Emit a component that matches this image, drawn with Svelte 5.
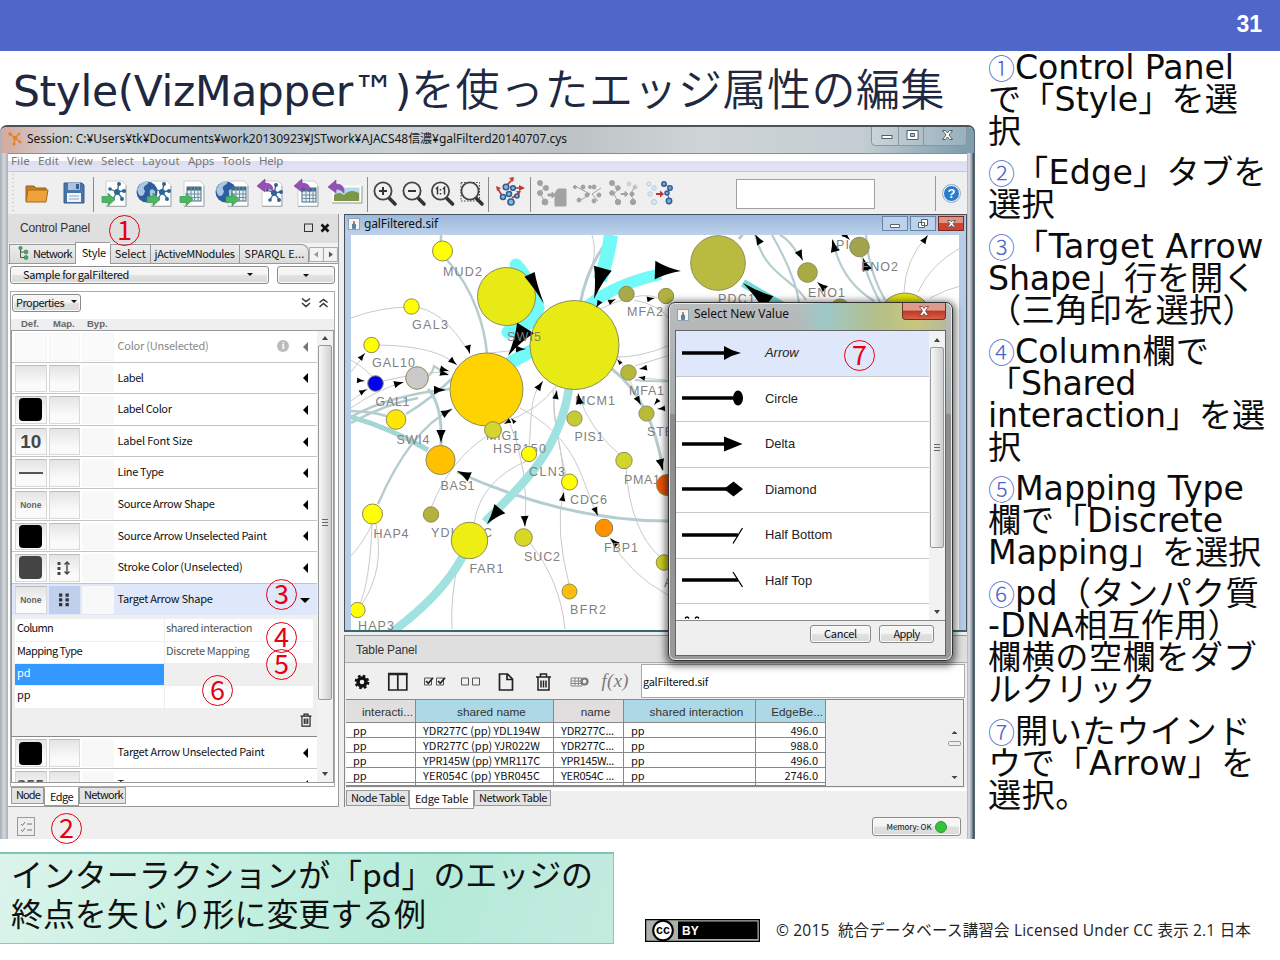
<script>
  // Spreads a label's letters so that it takes the given width.
  function fit(node, width) {
    const n = [...node.textContent.trim()].length;
    const now = node.getBoundingClientRect().width;
    if (width && n) node.style.letterSpacing = ((width - now) / n).toFixed(3) + 'px';
  }

  const steps = [
    ['①', [['Control Panel', 219], ['で「Style」を選', 250], ['択', 33]]],
    ['②', [['「Edge」タブを', 252], ['選択', 67]]],
    ['③', [['「Target Arrow', 249], ['Shape」行を開く', 268], ['（三角印を選択）', 268]]],
    ['④', [['Column欄で', 194], ['「Shared', 148], ['interaction」を選', 277], ['択', 33]]],
    ['⑤', [['Mapping Type', 229], ['欄で「Discrete', 235], ['Mapping」を選択', 273]]],
    ['⑥', [['pd（タンパク質', 244], ['-DNA相互作用）', 253], ['欄横の空欄をダブ', 269], ['ルクリック', 168]]],
    ['⑦', [['開いたウインド', 236], ['ウで「Arrow」を', 267], ['選択。', 101]]]
  ];

  const menus = ['File', 'Edit', 'View', 'Select', 'Layout', 'Apps', 'Tools', 'Help'];
  const menuW = [19, 21, 26, 33, 38, 26, 29, 24];

  const props = [
    { name: 'Color (Unselected)', w: 91, def: 'dim', off: true },
    { name: 'Label', w: 26, def: 'blank' },
    { name: 'Label Color', w: 54, def: 'black' },
    { name: 'Label Font Size', w: 75, def: 'ten' },
    { name: 'Line Type', w: 46, def: 'line' },
    { name: 'Source Arrow Shape', w: 97, def: 'none' },
    { name: 'Source Arrow Unselected Paint', w: 149, def: 'black' },
    { name: 'Stroke Color (Unselected)', w: 125, def: 'grey', map: 'cont' },
    { name: 'Target Arrow Shape', w: 95, def: 'none', map: 'disc', open: true }
  ];

  const shapes = ['Arrow', 'Circle', 'Delta', 'Diamond', 'Half Bottom', 'Half Top'];

  const rows = [
    ['YDR277C (pp) YDL194W', 'YDR277C...', '496.0'],
    ['YDR277C (pp) YJR022W', 'YDR277C...', '988.0'],
    ['YPR145W (pp) YMR117C', 'YPR145W...', '496.0'],
    ['YER054C (pp) YBR045C', 'YER054C ...', '2746.0']
  ];

  const nodes = [
    [442.5, 251, 10, '#ff0'], [506.5, 296.5, 29, '#e8ea15'], [574.5, 345, 44.5, '#e8ea15'],
    [486.5, 389.5, 36.5, '#ffd300'], [411.5, 306.5, 7.7, '#ff0'], [371.5, 345, 7.7, '#ff0'],
    [375.5, 383.5, 7.8, '#0000f5'], [417, 378, 11.3, '#cbc9c9'], [396, 419.5, 9.8, '#ffe600'],
    [440.5, 460, 14.6, '#ffc000'], [372.5, 514, 10, '#ff0'], [431, 514.5, 7.7, '#b2b23c'],
    [469.5, 540.5, 18.2, '#eeee14'], [523.5, 537.5, 8.8, '#d6d824'], [357.5, 610, 7.6, '#ff0'],
    [493, 430, 8.4, '#d4d630'], [529, 454, 7.6, '#ff0'], [574.5, 418.5, 7.6, '#c6ca34'],
    [569.5, 482, 8, '#ff0'], [624, 460.5, 8.2, '#d2d62a'], [604, 528, 8.8, '#ff9000'],
    [569.5, 591.5, 7.5, '#ffbd08'], [628.5, 372.5, 7.7, '#b6b83c'], [646.5, 413.5, 7.6, '#b8ba3a'],
    [667, 485, 10.5, '#ec5200'], [664, 562.5, 7.8, '#ccd020'], [626.5, 294, 7.7, '#a8aa4a'],
    [666, 296, 7.7, '#b0b240'], [718, 263, 27.3, '#b9bb40'], [807.5, 272.5, 9.8, '#a9ab42'],
    [859.5, 247, 9.8, '#a2a34c'], [905, 320, 27, '#dfe010'], [840, 308, 9, '#b4b43c']
  ];

  const under = [
    ['YDL194C', 431, 537, 61], ['MIG1', 486, 440, 33], ['HSP150', 493, 453, 53], ['MCM1', 575, 405, 40]
  ];
  const labels = [
    ['MUD2', 443, 276, 39], ['GAL3', 412, 328.5, 36], ['GAL10', 372, 367, 43], ['GAL1', 375.5, 405.5, 34],
    ['SWI4', 396.5, 443.5, 33], ['BAS1', 440.5, 489.5, 34], ['HAP4', 373.5, 538, 35],
    ['FAR1', 469.5, 573, 34], ['SUC2', 524, 561, 36], ['HAP3', 358, 630, 36],
    ['CLN3', 529, 476, 36], ['PIS1', 574.5, 441, 29], ['CDC6', 570, 504, 37],
    ['PMA1', 624, 484, 36], ['FBP1', 604, 552, 34], ['BFR2', 570, 613.5, 36], ['MFA1', 629, 395, 35],
    ['STE2', 647, 435.5, 34], ['MFA2', 627, 316, 36], ['PDC1', 718, 303, 37], ['ENO1', 808, 297, 37],
    ['ENO2', 861, 271, 37], ['SWI5', 507, 340.5, 34], ['PI', 836, 249, 13], ['APA1', 664, 587, 34]
  ];

  const thin = [
    'M351 318Q380 307 411 307T470 354', 'M371 345C410 345 440 350 457 365', 'M351 372Q362 358 365 353',
    'M351 360Q362 366 372 376', 'M383 381Q420 372 450 372', 'M351 401Q363 392 368 389', 'M351 408Q380 388 402 383',
    'M372 524Q370 580 360 604', 'M372 524Q365 540 351 556', 'M376 524Q385 570 362 604',
    'M431 508Q450 460 487 436', 'M529 460Q480 480 474 524', 'M508 418Q530 470 525 526', 'M529 450C532 410 530 395 543 381',
    'M563 493C565 440 548 420 556 390', 'M570 490Q555 440 553 390', 'M620 455Q590 430 578 394', 'M626 468Q630 530 660 557',
    'M569 584Q555 530 563 493', 'M530 543Q560 580 565 629', 'M459 557Q450 600 452 629', 'M668 595Q630 575 610 539',
    'M500 424Q540 410 556 386', 'M520 408C580 440 580 480 598 516', 'M600 309Q640 290 658 298', 'M634 300Q660 305 670 320',
    'M614 357Q640 358 670 345', 'M635 366L670 355', 'M614 350Q622 360 640 405', 'M592 235C600 260 585 280 580 300',
    'M904 292Q905 260 927 236', 'M918 292Q930 265 960 248', 'M930 298Q945 290 960 286', 'M666 380L641 378', 'M480 354L528 349'
  ];
  const wide = [
    ['M441 235V242', 2.5], ['M447 260C475 290 485 330 487 354', 2.5], ['M351 417Q390 395 450 389', 2.5],
    ['M351 411Q375 412 386 416', 2.5], ['M406 414Q430 400 457 374', 2.5], ['M428 389Q443 405 441 446', 3],
    ['M457 472C530 505 600 521 668 521', 3], ['M378 504Q410 430 452 409', 2.5],
    ['M351 423Q385 404 418 398', 2.5], ['M612 369Q652 400 663 470', 3], ['M635 380Q650 382 670 381', 2],
    ['M580 305Q587 265 612 235', 3], ['M755 235C765 275 795 280 806 300', 2.2], ['M772 235Q795 275 799 302', 2.2],
    ['M739 239L746 230', 3], ['M780 235Q790 240 799 256', 2.2], ['M833 240Q840 280 874 301', 2.2],
    ['M862 257Q868 280 880 302', 2.2], ['M866 235Q868 270 885 300', 2.2], ['M412 374Q430 384 434 366L448 375', 2.2]
  ];
  // [tip x, tip y, direction in degrees, length, half width as a share of length]
  const heads = [
    [544, 304, 64, 33, 0.17], [508, 356, 122, 33, 0.3], [594, 299, 106, 32, 0.29], [681, 271, 2, 26], [743, 283, 218, 32, 0.26],
    [470, 354, 75, 9], [457, 365, 40, 9], [449, 371, 15, 9], [449, 375, 15, 9], [365, 353, -50, 8],
    [365, 381, 5, 8], [367, 389, -30, 8], [404, 382, -15, 10], [446, 390, 0, 12], [452, 409, -30, 11],
    [441, 443, 90, 13], [457, 471, 205, 14], [487, 524, 130, 20], [525, 527, 88, 11], [543, 381, -55, 10],
    [557, 390, -80, 9], [578, 393, -100, 11], [564, 492, -78, 9], [598, 516, 66, 9], [610, 538, 225, 10],
    [663, 471, 75, 12], [641, 405, 60, 9], [639, 369, 170, 8], [638, 377, 190, 7], [654, 405, 130, 7],
    [657, 409, 175, 8], [616, 299, -25, 8], [655, 298, -10, 8], [596, 308, 120, 8], [526, 349, 0, 10],
    [803, 261, 65, 11], [817, 282, 220, 11], [755, 234, 240, 11], [832, 239, -105, 13], [863, 258, -110, 13],
    [928, 235, -55, 9], [850, 240, 45, 9], [617, 359, 230, 6], [511, 418, 230, 6], [504, 424, 150, 7]
  ];
</script>

{#snippet doc(x, y)}
  <path d="M{x} {y}h16l4 4v21h-20z" fill="#fff" stroke="#ccd0d3" />
  <path d="M{x + 20} {y + 5}v20.500h-20" fill="none" stroke="#a9adb0" />
{/snippet}
{#snippet net(x, y)}
  <path d="M{x} {y}l-7 -3M{x} {y}l2-8M{x} {y}l6 -1M{x} {y}l-4 7M{x} {y}l5 6" stroke="#3a6c94" stroke-width="1.300" />
  <g fill="#2f6591"><circle cx={x} cy={y} r="3" /><circle cx={x - 7} cy={y - 3} r="1.800" /><circle cx={x + 2} cy={y - 8} r="2" /><circle cx={x + 7} cy={y - 1} r="2" /><circle cx={x - 4} cy={y + 7} r="1.800" /><circle cx={x + 5} cy={y + 7} r="2" /></g>
{/snippet}
{#snippet grid(x, y)}
  <rect {x} {y} width="14" height="14" fill="#e9eff3" stroke="#456c87" />
  <rect {x} {y} width="14" height="3.500" fill="#456c87" />
  <path d="M{x + 4} {y}v14M{x + 7.5} {y}v14M{x + 11} {y}v14M{x} {y + 7}h14M{x} {y + 10.5}h14" stroke="#6f8fa5" />
{/snippet}
{#snippet globe(x)}
  <circle cx={x} cy="192" r="10.500" fill="#2c5d9e" /><path d="M{x - 9} 188q3-7 9-7q3 2-1 4t-1 6q-1 5-4 5t-4-8zM{x + 3} 190q4-2 5 1t-3 8q-3-4-2-9z" fill="#a9c7e4" />
{/snippet}
{#snippet into(x, y)}
  <path d="M{x} {y - 2.5}h6v-3.500l7 6.500l-7 6.500v-3.500h-6z" fill="#4db563" stroke="#36964d" stroke-width=".7" />
{/snippet}
{#snippet outof(x, y)}
  <path d="M{x} {y}l8-7v4q9 0 8 9q-3-4-8-4v4z" fill="#9550b5" stroke="#7c3d9b" stroke-width=".6" />
{/snippet}
{#snippet lens(x)}
  <path d="M{x + 5} 197l7 7" stroke="#333" stroke-width="3.600" stroke-linecap="round" /><circle cx={x} cy="191" r="8.600" fill="#f1f1f1" stroke="#444" stroke-width="1.800" />
{/snippet}
{#snippet bin()}
  <svg class="bin" viewBox="0 0 16 18"><path d="M1 4h14M5.500 4V1.500h5V4M2.800 4v12.800h10.400V4M5.800 7v7M8 7v7M10.200 7v7" fill="none" stroke="#222" stroke-width="1.500" /></svg>
{/snippet}

<div class="slide">
  <header><b>31</b></header>
  <main>
    <section class="left">
      <h1><span class="lat" use:fit={398}>Style(VizMapper™)</span><span use:fit={534}>を使ったエッジ属性の編集</span></h1>

      <div class="window">
        <div class="titlebar">
          <svg width="17" height="17" viewBox="0 0 17 17"><g stroke="#e58320" stroke-width="1.300"><path d="M8 8L3 4M8 8l4-4M8 8l5 4M8 8l-1 6" /></g><g fill="#e8811a"><circle cx="8" cy="8" r="2.300" /><circle cx="3" cy="4" r="1.700" /><circle cx="12" cy="4" r="1.300" /><circle cx="13" cy="12" r="1.400" /><circle cx="7" cy="14" r="1.500" /></g></svg>
          <span class="session"><span use:fit={540}>Session: C:¥Users¥tk¥Documents¥work20130923¥JSTwork¥AJACS48信濃¥galFilterd20140707.cys</span></span>
          <svg class="winbtns" width="96" height="20" viewBox="0 0 96 20"><path d="M.5 0v15q0 3.500 4 3.500h87q4 0 4-3.500V0M27.500 0v18M52.500 0v18" fill="#fff3" stroke="#8b959c" /><g fill="#fff" stroke="#555e66"><rect x="11" y="8.500" width="10" height="3" /><path fill-rule="evenodd" d="M36 3.500h11v9H36zM39.500 6.500h4v3h-4z" /><path d="M71.500 3.500h3l2 2.500 2-2.500h3l-3.500 4.500 3.500 4.500h-3l-2-2.500-2 2.500h-3l3.500-4.500z" /></g></svg>
        </div>

        <div class="client">
          <nav>{#each menus as m, i}<span use:fit={menuW[i]}>{m}</span>{/each}</nav>

          <div class="toolbar">
            <svg width="925" height="42" viewBox="8 172 925 42" fill="none">
              <path d="M13 174v38" stroke="#aaa" stroke-dasharray="1 3" />
              <path d="M26 201v-15h8l2 2h10v4" fill="#c67d1f" stroke="#9a5e13" /><path d="M26 202l2-12h20l-2 12z" fill="#eda23b" stroke="#a66a17" />
              <path d="M64 183h18l2 2v18H64z" fill="#4775a9" stroke="#365f91" /><path d="M68 183h12v7H68z" fill="#a9c4df" /><path d="M76 184h3v5h-3z" fill="#365f91" /><path d="M67 193h14v9H67z" fill="#f2f6fa" /><path d="M69 196h10M69 199h10" stroke="#8ca6c2" />
              <path d="M93.500 177v35M367.500 177v35M488.500 177v35M530.500 177v35" stroke="#8a8a8a" />
              {@render doc(106, 181)}{@render net(117, 192)}{@render into(102, 199)}
              {@render doc(151, 181)}{@render globe(147)}{@render net(162, 192)}{@render into(147, 199)}
              {@render doc(184, 181)}{@render grid(187, 187)}{@render into(180, 199)}
              {@render doc(228, 181)}{@render globe(226)}{@render grid(232, 187)}{@render into(226, 199)}
              {@render doc(262, 181)}{@render net(274, 193)}{@render outof(257, 186)}
              {@render doc(298, 181)}{@render grid(302, 188)}{@render outof(294, 186)}
              <path d="M333.500 186.500h27v15h-27z" fill="#b9d9ed" stroke="#fff" stroke-width="2" /><path d="M334 201v-6q5-4 10 0q6-7 15-2v8z" fill="#7b9848" /><path d="M332 203h30v-17" stroke="#999" />{@render outof(328, 187)}
              {@render lens(383)}<path d="M379 191h8M383 187v8" stroke="#333" stroke-width="2" />
              {@render lens(412)}<path d="M408 191h8" stroke="#333" stroke-width="2" />
              {@render lens(440.5)}<path d="M436 189l1.500-1.500v7M443 189l1.500-1.500v7" stroke="#333" stroke-width="1.500" /><path d="M440.500 189v1.500M440.500 193v1.500" stroke="#333" stroke-width="1.500" />
              <path d="M461 182.500h18.500V201H461z" stroke="#444" stroke-dasharray="1.500 1.500" />{@render lens(470)}
              <g stroke="#c03a3a" stroke-width="1.600"><path d="M506 186l6-6M514 188h8M503 197l-5-8M512 198l7-5" /></g><path d="M509 178l5-1-1 5zM519 185l6 3-6 3zM496 186l5 2-4 3zM516 191l5 0-2 4z" fill="#c03a3a" />
              <g fill="#8fb6db" stroke="#315f91" stroke-width="1.600"><circle cx="506" cy="187" r="2.800" /><circle cx="513" cy="188" r="2.300" /><circle cx="503" cy="197" r="2.500" /><circle cx="509" cy="194" r="2.500" /><circle cx="511" cy="202" r="3" /><circle cx="517" cy="196" r="2" /></g>
              <g fill="#a2a2a2" stroke="#a2a2a2"><path d="M539 183l5 5-4 5 5 9M577 187l13 7-9 6M601 188l-9 6 6 7M612 183l6 6-4 5 4 8M635 187l-5 7 5 8" fill="none" /><circle cx="540" cy="183" r="2.500" /><circle cx="546" cy="188" r="2.500" /><circle cx="540" cy="193" r="2.500" /><circle cx="545" cy="202" r="3" /><path d="M555 193l3-4h8v17h-11zM548 194h4l0-2 3 3-3 3v-2h-4z" />
                <circle cx="575" cy="187" r="1.500" /><circle cx="583" cy="187" r="2" /><circle cx="587" cy="195" r="2" /><circle cx="579" cy="200" r="2" /><circle cx="590" cy="187" r="1.500" /><circle cx="594" cy="187" r="2" /><circle cx="599" cy="195" r="2" /><circle cx="594" cy="201" r="2" />
                <circle cx="612" cy="183" r="2.500" /><circle cx="618" cy="188" r="2.300" /><circle cx="612" cy="193" r="2.300" /><circle cx="618" cy="202" r="2.700" /><path d="M621 193.500h4v-2l3 2.500-3 2.500v-2h-4z" /><circle cx="629" cy="184" r="2" opacity=".4" /><circle cx="635" cy="187" r="2" opacity=".5" /><circle cx="632" cy="194" r="2" /><circle cx="633" cy="202" r="2.700" /></g>
              <g fill="#dce8f3" stroke="#b4cade"><circle cx="649" cy="184" r="2" /><circle cx="654" cy="188" r="2.200" /><circle cx="650" cy="194" r="2.200" /><circle cx="654" cy="202" r="2.500" /></g><path d="M656 193h4v-2.500l4 3.500-4 3.500V195h-4z" fill="#bd3434" /><path d="M665 184l5 4-3 5 3 8" stroke="#3a6796" /><g fill="#7da8d1" stroke="#315f91" stroke-width="1.500"><circle cx="664" cy="184" r="2.200" /><circle cx="670" cy="188" r="2.200" /><circle cx="667" cy="193" r="2" /><circle cx="669" cy="201" r="2.700" /></g>
              <rect x="736.500" y="179.500" width="138" height="29" fill="#fff" stroke="#a0a0a0" />
            </svg>
            <div class="help"><i>?</i></div>
          </div>

          <div class="panes">
            <div class="control">
              <div class="cp-head"><span use:fit={70}>Control Panel</span><svg width="28" height="12" viewBox="0 0 28 12"><rect x="1.500" y="2" width="8" height="7.500" fill="none" stroke="#333" /><path d="M18.500 2.500l7 7M25.500 2.500l-7 7" stroke="#111" stroke-width="2.600" /></svg></div>
              <div class="tabs">
                <div class="t t1"><svg width="11" height="14" viewBox="0 0 11 14"><path d="M2.500 2v9.500H8M2.500 6H8" fill="none" stroke="#555" /><g fill="#4aa860" stroke="#2d7a42" stroke-width=".6"><circle cx="2.500" cy="2" r="1.700" /><circle cx="8" cy="6" r="2" /><circle cx="8" cy="11.500" r="2" /></g></svg><em use:fit={39}>Network</em></div>
                <span class="t t2 on"><span use:fit={24}>Style</span></span>
                <span class="t t3"><span use:fit={31}>Select</span></span>
                <span class="t t4"><span use:fit={80}>jActiveMNodules</span></span>
                <span class="t t5"><span use:fit={60}>SPARQL E...</span></span>
                <svg class="tnav" width="29" height="15" viewBox="0 0 29 15"><path d="M.5.5h14v14H.5zM14.500.5h14v14h-14z" fill="#f4f4f4" stroke="#aaa" /><path d="M9 4.500v6l-4-3z" fill="#999" /><path d="M20 4.500v6l4-3z" fill="#555" /></svg>
              </div>
              <div class="selects">
                <div class="btn combo"><span use:fit={106}>Sample for galFiltered</span><i class="dn"></i></div>
                <div class="btn mini"><i class="dn"></i></div>
              </div>
              <div class="vizbox">
                <div class="pbar"><div class="btn pbtn"><span use:fit={48}>Properties</span><i class="dn"></i></div>
                  <svg width="28" height="12" viewBox="0 0 28 12" fill="none" stroke="#333" stroke-width="1.500"><path d="M1 1.500l4 3 4-3M1 6l4 3.500L9 6M18.500 5.500l4-3 4 3M18.500 10l4-3.500 4 3.500" /></svg></div>
                <div class="cols"><span>Def.</span><span>Map.</span><span>Byp.</span></div>
                <div class="list">
                  <div class="items">
                    {#each props as p}
                      <div class="prop" class:off={p.off} class:open={p.open}>
                        <div class="cell {p.def}">{#if p.def === 'ten'}10{:else if p.def === 'none'}None{:else if p.def !== 'dim' && p.def !== 'blank'}<i></i>{/if}</div>
                        <div class="cell" class:sel={p.open}>
                          {#if p.map === 'cont'}<svg width="16" height="16" viewBox="0 0 16 16"><g fill="#444"><path d="M1.500 2h3v3h-3zM1.500 7h3v3h-3zM1.500 12h3v3h-3z" /></g><path d="M11 2v12M8.500 4.500L11 2l2.500 2.500M8.500 11.500L11 14l2.500-2.500" fill="none" stroke="#444" stroke-width="1.400" /></svg>
                          {:else if p.map === 'disc'}<svg width="14" height="14" viewBox="0 0 14 14" fill="#333"><path d="M2 .5h3.300v3.300H2zM2 5.300h3.300v3.300H2zM2 10h3.300v3.300H2zM8.500.5h3.300v3.300H8.500zM8.500 5.300h3.300v3.300H8.500zM8.500 10h3.300v3.300H8.500z" /></svg>{/if}
                        </div>
                        <div class="cell byp"></div>
                        <div class="pname"><span use:fit={p.w}>{p.name}</span></div>
                        {#if p.off}<b class="info">i</b>{/if}
                        <i class="tri" class:down={p.open}></i>
                      </div>
                    {/each}
                    <div class="mapping">
                      <div class="mrow"><span class="k"><span use:fit={36}>Column</span></span><span class="v"><span use:fit={86}>shared interaction</span></span></div>
                      <div class="mrow"><span class="k"><span use:fit={65}>Mapping Type</span></span><span class="v"><span use:fit={83}>Discrete Mapping</span></span></div>
                      <div class="mrow pd"><span class="k">pd</span><span class="v"></span></div>
                      <div class="mrow"><span class="k">pp</span><span class="v"></span></div>
                      <div class="trash">{@render bin()}</div>
                    </div>
                    <div class="prop"><div class="cell black"><i></i></div><div class="cell"></div><div class="cell byp"></div><div class="pname"><span use:fit={147}>Target Arrow Unselected Paint</span></div><i class="tri"></i></div>
                    <div class="prop last"><div class="cell off3">255</div><div class="cell"></div><div class="cell byp"></div><div class="pname">Transparency</div><i class="tri"></i></div>
                  </div>
                  <div class="scroll"><i class="up"></i><div class="thumb"><u></u></div><div class="sp"></div><i class="dn2"></i></div>
                </div>
              </div>
              <div class="btabs"><span class="b1"><span use:fit={24}>Node</span></span><span class="b2 on"><span use:fit={23}>Edge</span></span><span class="b3"><span use:fit={39}>Network</span></span></div>
            </div>

            <div class="work">
              <div class="frame">
                <div class="ftitle"><i class="java"></i><span use:fit={74}>galFiltered.sif</span>
                  <svg width="82" height="16" viewBox="0 0 82 16"><rect x=".5" y=".5" width="25" height="14" fill="#bcd2ea" stroke="#6584a6" /><rect x="28.500" y=".5" width="25" height="14" fill="#bcd2ea" stroke="#6584a6" /><rect x="56.500" y=".5" width="25" height="14" fill="#cc4430" stroke="#7d2a22" /><path d="M57 1h24v6H57z" fill="#e09283" /><g fill="#fff" stroke="#59636e"><path d="M8.500 8.500h9v3h-9zM39.500 3.500h6v6h-6zM36.500 6.500h6v5h-6z" /><path d="M65.500 4.500h2.500l1.500 1.500 1.500-1.500h2.500l-2.500 3.200 2.500 3.300h-2.500l-1.500-1.700-1.500 1.700h-2.500l2.500-3.300z" /></g></svg>
                </div>
                <svg class="canvas" width="608" height="395" viewBox="351 235 608 395">
                  <g fill="none" stroke="#cacaca">{#each thin as d}<path {d} />{/each}</g>
                  <g fill="none" stroke="#b6cdcf">{#each wide as [d, w]}<path {d} stroke-width={w} />{/each}</g>
                  <g fill="none">
                    <path d="M351 417Q390 428 428 450" stroke="#a5d6d4" stroke-width="5" />
                    <path d="M569 388C558 460 510 495 485 522M463 556C445 590 415 615 392 632" stroke="#a0e2df" stroke-width="8.500" />
                    <path d="M516 265Q530 280 538 308Q530 330 508 332M560 335L508 364" stroke="#72faf8" stroke-width="13" stroke-linecap="round" />
                    <path d="M611 235Q608 258 600 280" stroke="#72faf8" stroke-width="14" /><path d="M588 306Q615 284 661 274" stroke="#72faf8" stroke-width="12" />
                    <path d="M743 283L790 310" stroke="#72d8d8" stroke-width="8" />
                  </g>
                  <g class="gl">{#each under as [t, x, y, w]}<text {x} {y} textLength={w}>{t}</text>{/each}</g>
                  {#each nodes as [x, y, r, c]}<circle cx={x} cy={y} {r} fill={c} stroke="#8d8c56" />{/each}
                  {#each heads as [x, y, a, s, k = 0.36]}<path d="M0 0Q{-s * 0.6} {-s * k * 0.35} {-s} {-s * k}L{-s} {s * k}Q{-s * 0.6} {s * k * 0.35} 0 0Z" transform="translate({x} {y}) rotate({a})" />{/each}
                  <g class="gl">{#each labels as [t, x, y, w]}<text {x} {y} textLength={w}>{t}</text>{/each}</g>
                </svg>
              </div>
              <div class="tpanel">
                <div class="tp-head"><span use:fit={61}>Table Panel</span></div>
                <div class="tp-tools">
                  <svg width="290" height="34" viewBox="346 663.500 290 34" fill="none" stroke="#222">
                    <circle cx="362" cy="682.500" r="4" stroke-width="3.500" stroke="#111" /><circle cx="362" cy="682.500" r="6.200" stroke="#111" stroke-width="2.300" stroke-dasharray="2.600 2.270" />
                    <path d="M388.800 674.500h18v16h-18zM397.800 674v16" stroke-width="1.700" /><path d="M388 674.500h19.500" stroke-width="2.500" />
                    <path d="M424.500 678.500h7v7h-7zM436.500 678.500h7v7h-7z" stroke="#555" /><path d="M426 681.500l2.300 2.300 4.700-5.500M438 681.500l2.300 2.300 4.700-5.500" stroke-width="1.700" />
                    <path d="M461.500 678.500h7v7h-7zM472.500 678.500h7v7h-7z" stroke="#555" />
                    <path d="M499.500 674.500h8l5 5v11h-13zM507 674.500v5.500h5.500" stroke-width="1.700" />
                    <path d="M536 677.500h15M540.500 677v-2.500h6v2.500M538 678v12.500h11V678M541 681v7M543.500 681v7M546 681v7" stroke-width="1.500" />
                    <path d="M571 678.500h11v8h-11zM571 681.500h11M571 684h11M575 678v8M578.500 678v8" stroke="#888" /><circle cx="584.500" cy="682" r="3" stroke="#777" stroke-width="2.200" />
                    <text x="601.500" y="687" textLength="27" font-family="Liberation Serif" font-style="italic" font-size="18.500" fill="#777" stroke="none">f(x)</text>
                  </svg>
                  <div class="tname"><span use:fit={65}>galFiltered.sif</span></div>
                </div>
                <div class="tbl">
                  <div class="tr th"><span>interacti...</span><span class="b">shared name</span><span>name</span><span class="b">shared interaction</span><span class="b">EdgeBe...</span></div>
                  {#each rows as r}
                    <div class="tr"><span>pp</span><span><em use:fit={117}>{r[0]}</em></span><span><em use:fit={53}>{r[1]}</em></span><span>pp</span><span>{r[2]}</span></div>
                  {/each}
                  <div class="tr end"><span></span><span></span><span></span><span></span><span></span></div>
                  <svg class="tscroll" width="16" height="60" viewBox="0 0 16 60"><path d="M5.500 10l3-3 3 3zM5.500 52l3 3 3-3z" fill="#444" /><rect x="2.500" y="17.500" width="12" height="4" rx="1" fill="#eee" stroke="#999" /></svg>
                </div>
                <div class="ttabs"><span class="w1"><em use:fit={54}>Node Table</em></span><span class="w2 on"><em use:fit={53}>Edge Table</em></span><span class="w3"><em use:fit={68}>Network Table</em></span></div>
              </div>
            </div>
          </div>

          <div class="status">
            <svg width="19" height="19" viewBox="0 0 19 19" fill="none" stroke="#999"><rect x=".5" y=".5" width="17" height="18" fill="#eee" /><path d="M4 7l1.500 1.500L8 5M10 7h5M4 13l1.500 1.500L8 11M10 13h5" stroke="#777" /></svg>
            <div class="btn mem"><span use:fit={45}>Memory: OK</span><i></i></div>
          </div>
        </div>

        <div class="dialog">
          <div class="dtitle"><i class="java"></i><span use:fit={95}>Select New Value</span><div class="dx"><svg width="12" height="10" viewBox="0 0 12 10"><path d="M1.500.5h3L6 2.500 7.500.5h3L7.500 5l3 4.500h-3L6 7.500 4.500 9.500h-3L4.500 5z" fill="#fff" stroke="#6b3a36" stroke-width=".8" /></svg></div></div>
          <div class="dbody">
            <div class="dlist">
              <div class="ditems">
                {#each shapes as s, i}
                  <div class="di" class:cur={i === 0}>
                    <svg width="68" height="20" viewBox="0 0 68 20"><path d="M0 10h{[46, 54, 46, 46, 56, 56][i]}" stroke="#000" stroke-width="3.400" />
                      {#if i === 0}<path d="M42 3q8 5 17 7q-9 2-17 7z" />{:else if i === 1}<ellipse cx="56" cy="10" rx="5" ry="7.500" />{:else if i === 2}<path d="M42 2.500L60.500 10 42 17.500z" />{:else if i === 3}<path d="M42 10l9.500-7.500L61 10l-9.500 7.500z" />{:else if i === 4}<path d="M51 18.500L60.500 3" stroke="#000" stroke-width="1.300" />{:else}<path d="M51 2l9.500 15" stroke="#000" stroke-width="1.300" />{/if}
                    </svg><span>{s}</span>
                  </div>
                {/each}
                <div class="di more"><svg width="20" height="3" viewBox="0 0 20 3"><path d="M3 2.500q2-3 4 0M13 2.500q2-3 4 0" fill="none" stroke="#000" stroke-width="1.500" /></svg></div>
              </div>
              <div class="scroll"><i class="up"></i><div class="thumb"><u></u></div><div class="sp"></div><i class="dn2"></i></div>
            </div>
            <div class="dbtns"><div class="btn"><span use:fit={33}>Cancel</span></div><div class="btn b2n"><span use:fit={26}>Apply</span></div></div>
          </div>
        </div>
      </div>

      <div class="foot">
        <div class="summary"><div><span use:fit={582}>インターラクションが「pd」のエッジの</span></div><div><span use:fit={415}>終点を矢じり形に変更する例</span></div></div>
      </div>
    </section>

    <aside>
      {#each steps as [n, lines]}
        <div class="step">{#each lines as [t, w], i}<div class="ln">{#if i === 0}<span class="num">{n}</span>{/if}<span use:fit={w}>{t}</span></div>{/each}</div>
      {/each}
    </aside>
  </main>

  <div class="licence">
    <svg width="115" height="23" viewBox="0 0 115 23"><rect x=".5" y=".5" width="114" height="22" fill="#aab2ab" stroke="#000" stroke-width="1.500" /><path d="M33 2.500h79.500V20H33z" fill="#000" /><circle cx="18" cy="11.500" r="9.800" fill="#fff" stroke="#000" stroke-width="2" /><text x="11" y="15" font-family="Liberation Sans" font-weight="bold" font-size="12.500">cc</text><text x="37" y="16" font-family="Liberation Sans" font-weight="bold" font-size="12" fill="#fff">BY</text></svg>
    <span use:fit={475}>© 2015&nbsp; 統合データベース講習会 Licensed Under CC 表示 2.1 日本</span>
  </div>

  <div class="mark m1">1</div><div class="mark m2">2</div><div class="mark m3">3</div><div class="mark m4">4</div><div class="mark m5">5</div><div class="mark m6">6</div><div class="mark m7">7</div>
</div>

<style>
  :global(body) { margin: 0; background: #fff; }
  .slide, .slide * { box-sizing: border-box; }
  .slide { position: relative; width: 1280px; height: 960px; overflow: hidden; font-family: "Noto Sans CJK JP", sans-serif; color: #111; background: #fff; }
  .slide span { white-space: nowrap; }
  [class] > span, em { display: inline-block; font-style: normal; }
  header { height: 51px; background: #4f67c9; display: flex; justify-content: flex-end; padding-right: 18px; }
  header b { font: bold 23px/48px "Liberation Sans", sans-serif; color: #fff; }
  main { display: flex; height: 909px; }
  .left { width: 975px; flex: none; }
  h1 { margin: 0; height: 74px; padding-left: 13px; display: flex; align-items: baseline; font-weight: 350; font-size: 44px; line-height: 73px; color: #202840; }
  h1 span { display: inline-block; }
  .lat { font-family: "DejaVu Sans", sans-serif; font-size: 42.500px; font-weight: 400; }

  .window { position: relative; height: 714px; padding: 0 8px; border-top: 2px solid #4a525a; border-radius: 7px 7px 0 0; background: linear-gradient(90deg, #a4adb6, #d5d9dd 4px, #aab0b6 8px, #aab0b6 967px, #dde1e6 969px, #8f979f 972px, #333b45 974px, #78939f); }
  .titlebar { height: 26px; margin: 0 -7px; padding-left: 6px; display: flex; align-items: flex-start; border-radius: 6px 6px 0 0; background: linear-gradient(90deg, #d5a89f, #cfd3d6 60px, #b8c4cb 240px, #ccd2d5 400px, #bcc1c3 560px, #cfd4d6 700px, #c4ced3 860px, #7f9fae 961px); }
  .titlebar > svg:first-child { margin-top: 3px; }
  .session { flex: 1; padding-left: 3px; font: 12px/23px "Noto Sans", "Noto Sans CJK JP", sans-serif; color: #161616; }
  .session span { display: inline-block; }
  .winbtns { margin-right: 7px; }
  .client { height: 686px; background: #efefef; border-top: 1px solid #8b8e90; display: flex; flex-direction: column; }
  nav { height: 18px; display: flex; gap: 8px; padding-left: 3px; background: linear-gradient(#fff 0 40%, #dcdff1 42%, #e2e4f4); border-bottom: 1px solid #c2c4ce; font: 11.500px/13px "Noto Sans", sans-serif; color: #777; }
  nav span { display: inline-block; }
  .toolbar { height: 42px; flex: none; display: flex; background: #efefef; }
  .help { display: flex; align-items: center; padding-left: 7px; border-left: 1px solid #999; margin: 4px 0 3px 2px; }
  .help i { width: 17px; height: 17px; border-radius: 50%; border: 1px solid #fff; outline: 1px solid #9ab; background: #2a7bc9; color: #fff; font: bold 13px/15px "Liberation Sans", sans-serif; text-align: center; }
  .panes { height: 593px; display: flex; gap: 5px; }
  .control { width: 331px; font-size: 11px; line-height: 14px; display: flex; flex-direction: column; border-right: 1px solid #999; border-bottom: 1px solid #999; background: #fff; }
  .cp-head { height: 29px; padding: 0 7px 2px 12px; display: flex; justify-content: space-between; align-items: center; background: #dfdfdf; font: 12px "Liberation Sans", sans-serif; color: #333; }
  .tabs { height: 21px; display: flex; align-items: flex-end; padding-left: 1px; background: #f2f2f2; border-bottom: 1px solid #999; }
  .t { height: 19px; padding: 1px 0 0 4px; border: 1px solid #999; border-bottom: 0; border-right: 0; background: linear-gradient(#eee, #dadada); }
  .t1 { width: 66px; display: flex; gap: 4px; padding-left: 8px; }
  .t1 svg { flex: none; }
  .t2 { width: 35px; height: 22px; padding-left: 6px; padding-top: 2px; background: #fff; margin-bottom: -1px; }
  .t3 { width: 40px; padding-left: 4px; }
  .t4 { width: 90px; }
  .t5 { width: 70px; border-right: 1px solid #999; border-radius: 0 8px 0 0; }
  .tnav { margin-bottom: 1px; }
  .selects { display: flex; gap: 8px; padding: 2px 3px 0 2px; }
  .btn { display: flex; align-items: center; justify-content: center; border: 1px solid #8a8a8a; border-radius: 3px; background: linear-gradient(#f5f5f5 45%, #e0e0e0 55%, #dadada); font-size: 11px; line-height: 14px; box-shadow: inset 0 0 0 1px #fafafa; padding-bottom: 3px; }
  .combo { width: 261px; height: 18px; justify-content: space-between; padding: 0 15px 2px 12px; }
  .mini { width: 58px; height: 18px; padding-bottom: 0; }
  .dn { border: 3px solid transparent; border-top: 3px solid #111; border-bottom: 0; }
  .vizbox { margin: 7px 3px 0 2px; height: 496px; border: 1px solid #aaa; display: flex; flex-direction: column; }
  .pbar { height: 27px; flex: none; display: flex; align-items: center; justify-content: space-between; padding: 0 5px 5px 1px; }
  .pbtn { width: 69px; height: 18px; gap: 7px; }
  .cols { height: 11px; flex: none; background: #efefef; display: flex; padding-left: 10px; font: bold 9.500px/10px "Liberation Sans", sans-serif; color: #666; }
  .cols span { width: 32px; } .cols span:nth-child(2) { width: 34px; }
  .list { height: 453px; overflow: hidden; display: flex; border: 1px solid #999; background: #efefef; }
  .items { width: 307px; }
  .prop { height: 31.600px; display: flex; align-items: stretch; gap: 2px; padding: 2px 0 1px 3px; background: #fff; border-bottom: 1px solid #c4c4c4; position: relative; }
  .open { background: #dfe7fa; border: 0; }
  .cell { width: 31.500px; border: 1px solid #d8d8d8; border-top-color: #bbb; background: linear-gradient(#e4e4e4, #fafafa 70%); display: flex; align-items: center; justify-content: center; }
  .cell i { width: 23px; height: 23px; border-radius: 4px; background: #000; }
  .grey i { background: #444; }
  .line i { width: 24px; height: 2px; border-radius: 0; background: #555; }
  .cell.ten { font: bold 19px "Liberation Sans", sans-serif; color: #484848; }
  .cell.none { font: bold 8.500px "Liberation Sans", sans-serif; color: #666; }
  .cell.off3 { font: bold 13px "DejaVu Sans", sans-serif; color: #555; }
  .cell.sel { background: #bfd0ef; border-color: #bfd0ef; }
  .cell.byp { background: #f8f8f8; border-color: #f8f8f8; }
  .off .cell { background: #fbfbfb; border-color: #f5f5f5; }
  .pname { flex: 1; padding: 5px 0 0 2px; }
  .off .pname { color: #888; }
  .info { width: 12px; height: 12px; margin: 7px 12px 0 0; border-radius: 50%; background: #bbb; color: #fff; font: bold 10px/12px "Liberation Serif", serif; text-align: center; }
  .tri { align-self: center; margin-right: 9px; border: 5px solid transparent; border-right: 5px solid #000; border-left: 0; }
  .off .tri { border-right-color: #777; }
  .tri.down { border: 5px solid transparent; border-top: 5px solid #000; border-bottom: 0; margin-right: 7px; }
  .mapping { height: 122px; padding: 4px 4px 0 3px; border-bottom: 1px solid #888; }
  .mrow { display: flex; height: 22.300px; background: #fff; border-bottom: 1px solid #eee; line-height: 17px; }
  .k { width: 150px; padding-left: 2px; border-right: 1px solid #eee; }
  .v { flex: 1; padding-left: 1px; color: #555; }
  .pd { background: #efefef; } .pd .k { background: #3399ff; color: #fff; }
  .trash { height: 22px; display: flex; justify-content: flex-end; align-items: center; }
  .bin { width: 14px; height: 14px; }
  .scroll { width: 16px; display: flex; flex-direction: column; align-items: center; background: #f2f2f2; }
  .up { margin: 5px 0 5px; border: 3px solid transparent; border-bottom: 4px solid #444; border-top: 0; }
  .dn2 { margin-bottom: 6px; border: 3px solid transparent; border-top: 4px solid #444; border-bottom: 0; }
  .thumb { width: 14px; height: 355px; border: 1px solid #999; border-radius: 2px; background: linear-gradient(90deg, #f8f8f8, #cfcfd2); display: flex; align-items: center; justify-content: center; }
  .thumb u { width: 6px; height: 7px; background: repeating-linear-gradient(#666 0 1px, transparent 1px 3px); }
  .sp { flex: 1; }
  .btabs { display: flex; align-items: flex-start; padding: 0 3px; }
  .btabs > span { height: 17px; border: 1px solid #999; background: #e4e4e4; padding: 0 4px; line-height: 13px; }
  .btabs .on { height: 19px; background: #fff; border-color: #fff #999 #999; line-height: 16px; padding: 0 5px; }
  .b1 { width: 33px; } .b2 { width: 35px; } .b3 { width: 47px; }

  .work { flex: 1; display: flex; flex-direction: column; }
  .frame { height: 418px; border: 1px solid #45505c; border-bottom: 2px solid #37696f; padding: 0 6px; background: #b7cde6; }
  .ftitle { height: 20px; display: flex; align-items: center; gap: 4px; background: linear-gradient(#9bb8dc, #bdd2ea); margin: 0 -5px; padding: 0 1px 3px 2px; font: 12px/16px "Noto Sans", sans-serif; }
  .ftitle svg { margin-left: auto; }
  .java { flex: none; width: 12px; height: 12px; border: 1px solid #8fa3b7; background: radial-gradient(circle at 50% 30%, #e7803a 0 15%, transparent 17%), radial-gradient(ellipse at 50% 72%, #5882a1 0 30%, #f4f4f4 34%); }
  .canvas { display: block; background: #fff; }
  .gl { font: 12.500px "Liberation Sans", sans-serif; fill: #808080; }
  .tpanel { margin-top: 3px; height: 172px; border-left: 1px solid #888; }
  .tp-head { height: 28px; padding: 0 11px; border-top: 1px solid #999; border-bottom: 1px solid #aaa; background: #dfdfdf; font: 12px/28px "Liberation Sans", sans-serif; color: #333; }
  .tp-tools { height: 36px; display: flex; }
  .tp-tools > svg { margin-left: 1px; flex: none; }
  .tname { flex: 1; height: 34px; margin: 1px 2px 0 5px; border: 1px solid #aaa; background: #fff; padding-left: 1px; font-size: 11px; line-height: 33px; }
  .tbl { position: relative; width: 618px; height: 88px; margin-left: 1px; border: 1px solid #888; border-left: 0; }
  .tr { width: 480px; display: grid; grid-template-columns: 70px 138px 70px 132px 70px; height: 14.900px; font-size: 11px; line-height: 14px; background: #fff; }
  .tr span { border-right: 1px solid #888; border-bottom: 1px solid #888; padding-left: 7px; overflow: hidden; }
  .tr span:last-child { text-align: right; padding-right: 7px; }
  .th { height: 23px; font: 11.800px/24px "Liberation Sans", sans-serif; color: #333; }
  .th span { text-align: center; background: #e0dede; padding-left: 14px; }
  .th span:last-child { padding-right: 2px; }
  .th .b { background: #add8e6; }
  .end { height: 3px; }
  .tscroll { position: absolute; right: 1px; top: 24px; }
  .ttabs { display: flex; font-size: 11px; line-height: 13px; margin-top: 1px; border-top: 3px solid #fff; padding-left: 1px; }
  .ttabs span { height: 16px; margin-top: -1px; padding: 0 4px; background: #e4e4e4; border: 1px solid #999; }
  .ttabs .on { height: 19px; padding: 2px 5px; background: #fff; border-top: 0; }
  .w1 { width: 63px; } .w2 { width: 65px; } .w3 { width: 77px; }
  .status { flex: 1; display: flex; justify-content: space-between; padding: 10px 6px 0 9px; }
  .mem { width: 89px; height: 19px; gap: 3px; font-size: 8px; padding: 0; }
  .mem i { width: 12px; height: 12px; border-radius: 50%; background: #33c43a; border: 1px solid #3a8f3e; }

  .dialog { position: absolute; left: 668px; top: 175px; width: 285px; height: 359px; border: 1px solid #333; border-radius: 7px; padding: 0 6px; background: linear-gradient(#b9bcbd, #a4aaac 110px, #8c8c8c 112px, #9a9a9a); box-shadow: 0 2px 7px 3px #0008, inset 0 0 0 1px #e8e8e8; }
  .dtitle { height: 27px; display: flex; align-items: flex-start; gap: 5px; padding-left: 2px; background: linear-gradient(90deg, transparent 120px, #9ec8c8 150px, #b3bf8c 200px, #c8c67c 240px, #b9b99a); font: 12px/22px "Noto Sans", sans-serif; color: #111; }
  .dtitle .java { margin-top: 6px; }
  .dx { margin-left: auto; width: 44px; height: 17px; border: 1px solid #70332b; border-top: 0; border-radius: 0 0 4px 4px; background: linear-gradient(#dd9b8e 45%, #c03820 50%, #d4604a); display: flex; align-items: center; justify-content: center; }
  .dbody { height: 326px; border: 1px solid #666; background: #efefef; }
  .dlist { height: 290px; display: flex; border-bottom: 1px solid #888; background: #fff; overflow: hidden; }
  .ditems { width: 254px; }
  .di { height: 45.500px; display: flex; align-items: center; padding: 0 0 1px 6px; border-bottom: 1px solid #c8c8c8; background: #fff; font: 12.900px "Liberation Sans", sans-serif; color: #222; }
  .di span { padding-left: 15px; }
  .cur { background: #dfe7fa; }
  .cur span { font-style: italic; }
  .more { height: 16px; align-items: flex-end; border: 0; }
  .dlist .thumb { height: 201px; flex: none; }
  .dlist .up, .dlist .dn2 { flex: none; }
  .dlist .up { margin-top: 7px; }
  .dbtns { display: flex; gap: 8px; padding: 4px 11px 0 0; justify-content: flex-end; }
  .dbtns .btn { width: 61px; height: 18px; }
  .dbtns .b2n { width: 55px; }

  .foot { padding-top: 13px; }
  .summary { width: 614px; height: 92px; padding: 0 0 0 11px; border: 1px solid #7ecfb8; border-left: 0; border-top: 2px solid #7cc4b4; background: linear-gradient(110deg, #dcf4eb, #c0efdf 45%, #b5ead9 70%, #c4ebdf); font-size: 32px; line-height: 38.500px; color: #111; }
  .summary span { display: inline-block; }
  aside { padding: 1px 0 0 13px; font: 33.200px/32px "DejaVu Sans", "Noto Sans CJK JP", sans-serif; color: #0c0c0c; display: flex; flex-direction: column; gap: 9.300px; font-weight: 400; }
  .ln { height: 32px; white-space: nowrap; }
  .ln span { display: inline-block; height: 32px; line-height: 32px; }
  .ln .num { font-family: "Noto Sans CJK JP", sans-serif; font-size: 27px; color: #4f67c9; font-weight: 300; }
  .licence { position: absolute; left: 645px; top: 919px; height: 23px; display: flex; align-items: center; gap: 16px; font: 15.500px/23px "Open Sans", "Noto Sans CJK JP", sans-serif; color: #222; }
  .mark { position: absolute; width: 31px; height: 31px; border: 1.500px solid #e50012; border-radius: 50%; font: 400 27px/26px "Noto Sans CJK JP", sans-serif; color: #e50012; text-align: center; }
  .m1 { left: 109px; top: 215px; } .m2 { left: 51px; top: 813px; } .m3 { left: 266px; top: 579px; } .m4 { left: 266px; top: 622px; }
  .m5 { left: 266px; top: 649px; } .m6 { left: 202px; top: 675px; } .m7 { left: 844px; top: 340px; }
</style>
